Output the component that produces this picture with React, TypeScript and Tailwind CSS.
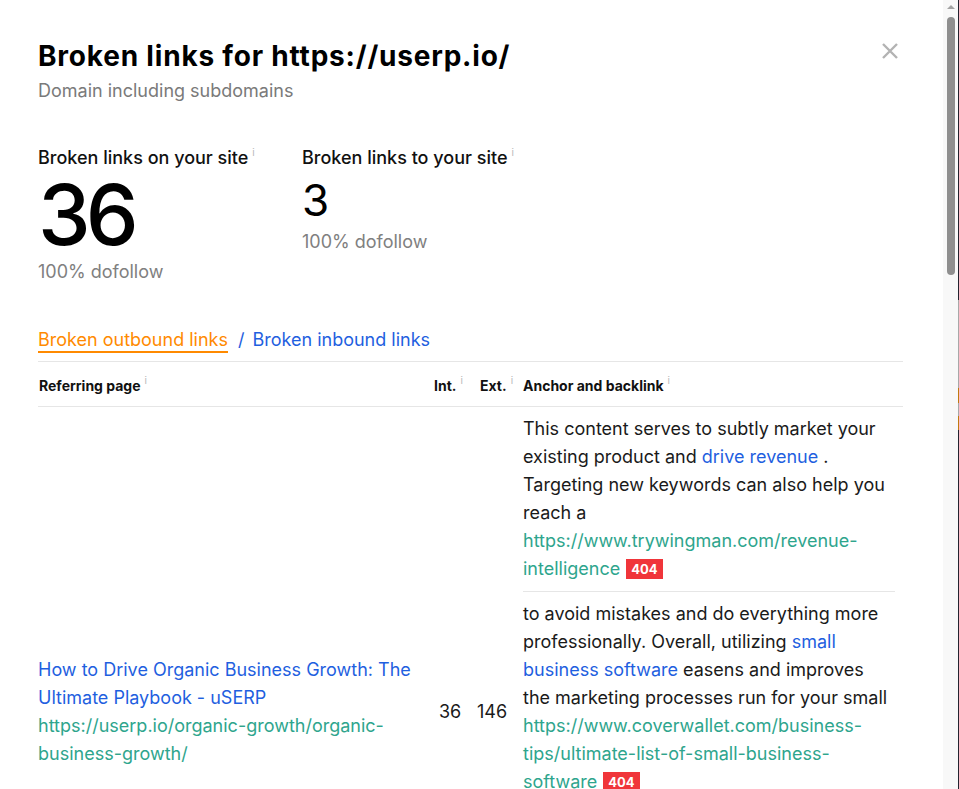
import React from "react";

const sans = { fontFamily: "Inter, 'Noto Sans', sans-serif" };

function Info() {
  return (
    <span className="relative -top-[6px] ml-[4px] text-[10px] font-normal text-[#b9b9b9]">
      i
    </span>
  );
}

function Badge() {
  return (
    <span className="ml-[6px] inline-block bg-[#f0353a] px-[5px] align-[1px] text-[13px] font-bold leading-[20px] text-white">
      404
    </span>
  );
}

function Stat({ label, value, big }: { label: string; value: string; big?: boolean }) {
  return (
    <div className={big ? "flex w-[264px] flex-col" : "flex flex-col"}>
      <div className="flex items-start text-[18px] font-medium leading-[22px] text-[#111]">
        {label}
        <Info />
      </div>
      <div
        className={
          big
            ? "mt-[3px] text-[84px] font-medium leading-[86px] tracking-[-5px] text-black"
            : "mt-[8px] text-[44px] font-normal leading-[46px] text-black"
        }
      >
        {value}
      </div>
      <div className={big ? "mt-[2px] text-[18px] leading-[24px] text-[#808080]" : "mt-[7px] text-[18px] leading-[24px] text-[#808080]"}>
        100% dofollow
      </div>
    </div>
  );
}

function Scrollbar() {
  return (
    <div className="flex h-full w-[16px] shrink-0">
      <div className="flex w-[15px] flex-col items-center bg-[#f8f8f8]">
        <svg width="10" height="10" viewBox="0 0 10 10" className="mt-[2px]">
          <path d="M1 7 L5 3 L9 7 Z" fill="#a3a3a3" />
        </svg>
        <div className="mt-[5px] h-[258px] w-[8px] rounded-full bg-[#8f8f8f]" />
      </div>
      <div className="flex w-[1px] flex-col bg-[#23232f]">
        <div className="h-[300px]" />
        <div className="h-[88px] bg-[#a8a8a8]" />
        <div className="h-[15px] bg-[#c07a10]" />
        <div className="h-[13px] bg-[#a8a8a8]" />
        <div className="h-[14px] bg-[#c07a10]" />
      </div>
    </div>
  );
}

export default function App() {
  return (
    <div className="flex h-[789px] w-[959px] overflow-hidden bg-white" style={sans}>
      <div className="flex min-w-0 flex-1 flex-col pl-[38px] pr-[40px] pt-[38px]">
        {/* title */}
        <div className="flex items-start justify-between">
          <div>
            <h1 className="text-[28px] font-bold leading-[36px] tracking-[0.8px] text-black">
              Broken links for https://userp.io/
            </h1>
            <p className="mt-[5px] text-[18px] leading-[24px] text-[#7a7a7a]">
              Domain including subdomains
            </p>
          </div>
          <svg width="18" height="18" viewBox="0 0 18 18" className="mr-[4px] mt-[4px]">
            <path d="M2 2 L16 16 M16 2 L2 16" stroke="#b3b3b3" strokeWidth="2.4" />
          </svg>
        </div>

        {/* totals */}
        <div className="mt-[44px] flex">
          <Stat label="Broken links on your site" value="36" big />
          <Stat label="Broken links to your site" value="3" />
        </div>

        {/* tabs */}
        <div className="mt-[45px] flex items-start text-[18px] leading-[22px]">
          <span className="border-b-2 border-[#ff8a00] text-[#ff8a00]">Broken outbound links</span>
          <span className="ml-[10px] text-[#1f5fe0]">/</span>
          <span className="ml-[8px] text-[#1f5fe0]">Broken inbound links</span>
        </div>

        {/* table */}
        <div className="mt-[8px] border-t border-[#e6e6e6]">
          <div className="grid grid-cols-[396px_46px_43px_1fr] border-b border-[#e6e6e6] pb-[10px] pt-[14px] text-[14px] font-bold leading-[20px] text-[#111]">
            <div className="flex items-start pl-[1px]">Referring page<Info /></div>
            <div className="flex items-start">Int.<Info /></div>
            <div className="flex items-start">Ext.<Info /></div>
            <div className="flex items-start">Anchor and backlink<Info /></div>
          </div>

          <div className="grid grid-cols-[396px_46px_43px_1fr] text-[18px] leading-[28px] text-[#1a1a1a]">
            <div className="flex flex-col pr-[10px] pt-[249px]">
              <span className="text-[#1f5fe0]">How to Drive Organic Business Growth: The Ultimate Playbook - uSERP</span>
              <span className="text-[#2ea58d]">https://userp.io/organic-growth/organic-business-growth/</span>
            </div>
            <div className="pl-[5px] pt-[291px]">36</div>
            <div className="-ml-[3px] pt-[291px]">146</div>
            <div className="flex flex-col pr-[8px]">
              <div className="border-b border-[#e6e6e6] pb-[8px] pt-[8px]">
                This content serves to subtly market your existing product and{" "}
                <span className="text-[#1f5fe0]">drive revenue</span> . Targeting new keywords can also help you reach a{" "}
                <span className="text-[#2ea58d]">https://www.trywingman.com/revenue-intelligence</span>
                <Badge />
              </div>
              <div className="pt-[8px]">
                to avoid mistakes and do everything more professionally. Overall, utilizing{" "}
                <span className="text-[#1f5fe0]">small business software</span> easens and improves the marketing processes run for your small{" "}
                <span className="text-[#2ea58d]">https://www.coverwallet.com/business-tips/ultimate-list-of-small-business-software</span>
                <Badge />
              </div>
            </div>
          </div>
        </div>
      </div>
      <Scrollbar />
    </div>
  );
}
